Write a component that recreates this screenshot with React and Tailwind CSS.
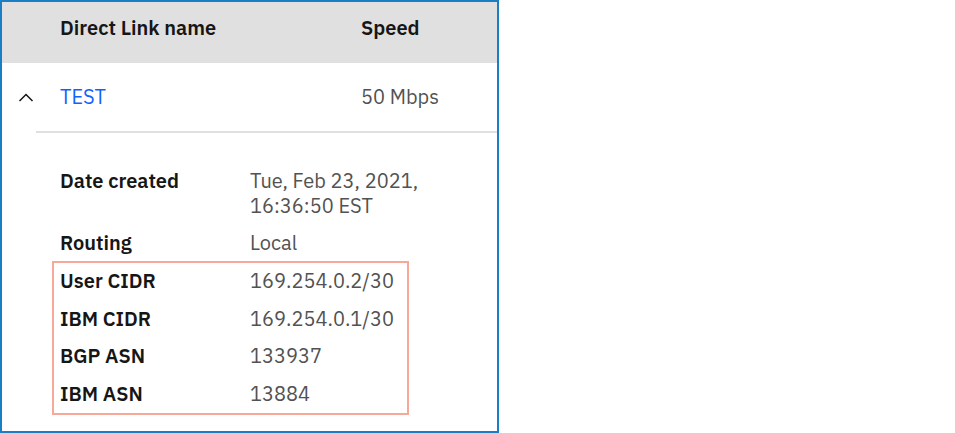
export default function App() {
  const font = { fontFamily: '"IBM Plex Sans", "Noto Sans", sans-serif' };
  return (
    <div className="w-[955px] h-[433px] bg-white" style={font}>
      <div className="w-[499px] h-[433px] border-2 border-[#1a7ec6] flex flex-col">
        <div className="h-[61px] bg-[#e0e0e0] flex items-start pt-[12px] shrink-0 text-[20px] leading-[28px]">
          <div className="w-[58px]" />
          <div className="w-[301px] font-semibold text-[#161616]">Direct Link name</div>
          <div className="font-semibold text-[#161616]">Speed</div>
        </div>
        <div className="h-[70px] flex items-center border-b-2 border-[#e0e0e0] ml-[34px] shrink-0 text-[20px]">
          <div className="w-[24px] -ml-[22px] mr-[22px] mt-[2px] flex justify-center">
            <svg width="16" height="10" viewBox="0 0 16 10" fill="none">
              <path d="M1.5 8 L8 1.5 L14.5 8" stroke="#161616" strokeWidth="1.5" />
            </svg>
          </div>
          <div className="w-[301px] text-[#0f62fe]">TEST</div>
          <div className="text-[#525252]">50 Mbps</div>
        </div>
        <div className="pl-[58px] pt-[35px] flex flex-col text-[20px] leading-[25px]">
          <div className="flex">
            <div className="w-[190px] font-semibold text-[#161616]">Date created</div>
            <div className="text-[#525252]">Tue, Feb 23, 2021,<br />16:36:50 EST</div>
          </div>
          <div className="flex mt-[12px]">
            <div className="w-[190px] font-semibold text-[#161616]">Routing</div>
            <div className="text-[#525252]">Local</div>
          </div>
          <div className="-ml-[8px] mt-[6px] w-[357px] border-2 border-[#f7a898] pl-[6px] pt-[5px] pb-[7px] flex flex-col gap-[12.5px]">
            {[
              ["User CIDR", "169.254.0.2/30"],
              ["IBM CIDR", "169.254.0.1/30"],
              ["BGP ASN", "133937"],
              ["IBM ASN", "13884"],
            ].map(([k, v]) => (
              <div key={k} className="flex">
                <div className="w-[190px] font-semibold text-[#161616]">{k}</div>
                <div className="text-[#525252]">{v}</div>
              </div>
            ))}
          </div>
        </div>
      </div>
    </div>
  );
}
